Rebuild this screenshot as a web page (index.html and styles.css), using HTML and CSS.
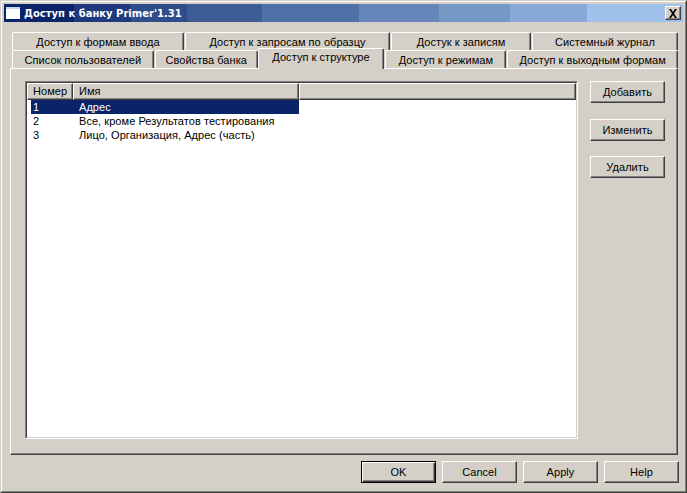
FILE: index.html
```html
<!DOCTYPE html>
<html lang="ru">
<head>
<meta charset="utf-8">
<title>Доступ к банку</title>
<link rel="stylesheet" href="styles.css">
</head>
<body>
<div class="win">
  <div class="win-in">
    <div class="titlebar">
      <svg class="app-icon" width="16" height="14" viewBox="0 0 16 14"><rect x="0" y="1" width="14" height="12" fill="#fff"/><rect x="0" y="1" width="14" height="2" fill="#c8d4ee"/></svg>
      <span class="title">Доступ к банку Primer'1.31</span>
      <span class="close"><svg width="10" height="9" viewBox="0 0 10 9"><path d="M1 0h2l2 3 2-3h2L6 4.500 9 9H7L5 6 3 9H1l3-4.500z" fill="#000"/></svg></span>
    </div>
    <div class="tabs">
      <div class="tab-row back">
        <div class="tab t1">Доступ к формам ввода</div>
        <div class="tab t2">Доступ к запросам по образцу</div>
        <div class="tab t3">Достук к записям</div>
        <div class="tab t4">Системный журнал</div>
      </div>
      <div class="tab-row front">
        <div class="tab t5">Список пользователей</div>
        <div class="tab t6">Свойства банка</div>
        <div class="tab t7 active">Доступ к структуре</div>
        <div class="tab t8">Доступ к режимам</div>
        <div class="tab t9">Доступ к выходным формам</div>
      </div>
      <div class="panel">
        <div class="list">
          <div class="list-in">
            <div class="head">
              <div class="hcell h1">Номер</div>
              <div class="hcell h2">Имя</div>
              <div class="hcell h3"></div>
            </div>
            <div class="row selected"><span class="num">1</span><span>Адрес</span></div>
            <div class="row"><span class="num">2</span><span>Все, кроме Результатов тестирования</span></div>
            <div class="row"><span class="num">3</span><span>Лицо, Организация, Адрес (часть)</span></div>
          </div>
        </div>
        <div class="side">
          <button class="btn">Добавить</button>
          <button class="btn">Изменить</button>
          <button class="btn last">Удалить</button>
        </div>
      </div>
    </div>
    <div class="footer">
      <button class="btn default">OK</button>
      <button class="btn">Cancel</button>
      <button class="btn">Apply</button>
      <button class="btn">Help</button>
    </div>
  </div>
</div>
</body>
</html>
```
FILE: styles.css
```css
* { box-sizing: border-box; }
html, body { margin: 0; padding: 0; }
body {
  width: 687px;
  height: 493px;
  overflow: hidden;
  background: #d4d0c8;
  font-family: "Liberation Sans", Arial, sans-serif;
  font-size: 11px;
  letter-spacing: 0.05px;
  color: #000;
}
.win {
  width: 687px;
  height: 493px;
  border: 1px solid;
  border-color: #d4d0c8 #404040 #404040 #d4d0c8;
}
.win-in {
  height: 100%;
  border: 1px solid;
  border-color: #fff #808080 #808080 #fff;
  padding: 2px;
}
.titlebar {
  height: 18px;
  display: flex;
  align-items: center;
  padding: 0 2px;
  color: #fff;
  background: linear-gradient(to right,
    #0a246a 0, #0a246a 70px,
    #1e3a7c 70px, #1e3a7c 127px,
    #2f4d8a 127px, #2f4d8a 183px,
    #3d5c96 183px, #3d5c96 258px,
    #5070a8 258px, #5070a8 355px,
    #6685ba 355px, #6685ba 435px,
    #7598c4 435px, #7598c4 506px,
    #88a9d8 506px, #88a9d8 583px,
    #a0c2ea 583px, #a0c2ea 678px);
}
.app-icon { flex: none; }
.title {
  margin-left: 2px;
  flex: 1;
  font-family: "DejaVu Sans", sans-serif;
  font-weight: bold;
  font-size: 10px;
  letter-spacing: 0;
  white-space: nowrap;
}
.close {
  width: 16px;
  height: 14px;
  display: flex;
  align-items: center;
  justify-content: center;
  background: #d4d0c8;
  border: 1px solid;
  border-color: #fff #404040 #404040 #fff;
  box-shadow: inset -1px -1px 0 #808080;
}
.tabs {
  margin: 10px 0 0 6px;
  width: 668px;
}
.tab-row {
  display: flex;
  height: 18px;
  padding-left: 2px;
  column-gap: 1px;
}
.tab {
  height: 18px;
  line-height: 19px;
  text-align: center;
  white-space: nowrap;
  border: 1px solid #d4d0c8;
  border-top-color: #fff;
  border-left-color: #fff;
  border-right-color: #404040;
  border-bottom: 0;
  border-radius: 2px 2px 0 0;
  box-shadow: inset -1px 0 0 #808080;
}
.t1 { width: 172px; }
.t2 { width: 205px; }
.t3 { width: 140px; }
.t4 { width: 146px; }
.t5 { width: 142px; }
.t6 { width: 103px; margin-right: -1px; }
.t7 { width: 127px; }
.t8 { width: 121px; }
.t9 { width: 171px; }
.tab.active {
  position: relative;
  z-index: 2;
  height: 21px;
  margin-top: -2px;
  line-height: 17px;
  background: #d4d0c8;
}
.panel {
  position: relative;
  height: 387px;
  display: flex;
  padding: 13px 0 0 14px;
  border: 1px solid;
  border-color: #fff #404040 #404040 #fff;
  box-shadow: inset -1px -1px 0 #808080;
}
.list {
  width: 553px;
  height: 358px;
  border: 1px solid;
  border-color: #808080 #fff #fff #808080;
  margin-top: -1px;
}
.list-in {
  height: 100%;
  background: #fff;
  border: 1px solid;
  border-color: #404040 #d4d0c8 #d4d0c8 #404040;
}
.head {
  display: flex;
  height: 17px;
}
.hcell {
  height: 17px;
  line-height: 15px;
  padding-left: 5px;
  background: #d4d0c8;
  border: 1px solid;
  border-color: #fff #404040 #404040 #fff;
  box-shadow: inset -1px -1px 0 #808080;
}
.h1 { width: 46px; }
.h2 { width: 226px; }
.h3 { flex: 1; }
.row {
  display: flex;
  height: 14px;
  line-height: 14px;
  width: 268px;
  margin-left: 4px;
  padding-left: 2px;
}
.num { width: 46px; }
.selected {
  background: #0a246a;
  color: #fff;
}
.side {
  margin-left: 12px;
  margin-top: -1px;
  display: flex;
  flex-direction: column;
  row-gap: 16px;
}
.btn {
  display: block;
  width: 75px;
  height: 22px;
  padding: 0;
  font: inherit;
  letter-spacing: inherit;
  color: #000;
  background: #d4d0c8;
  border: 1px solid;
  border-color: #fff #404040 #404040 #fff;
  box-shadow: inset -1px -1px 0 #808080;
}
.last { margin-top: -1px; }
.footer {
  display: flex;
  justify-content: flex-end;
  column-gap: 6px;
  margin-top: 6px;
  padding-right: 4px;
}
.default {
  border-color: #000;
  box-shadow: inset 1px 1px 0 #fff, inset -1px -1px 0 #404040, inset -2px -2px 0 #808080;
}
```
